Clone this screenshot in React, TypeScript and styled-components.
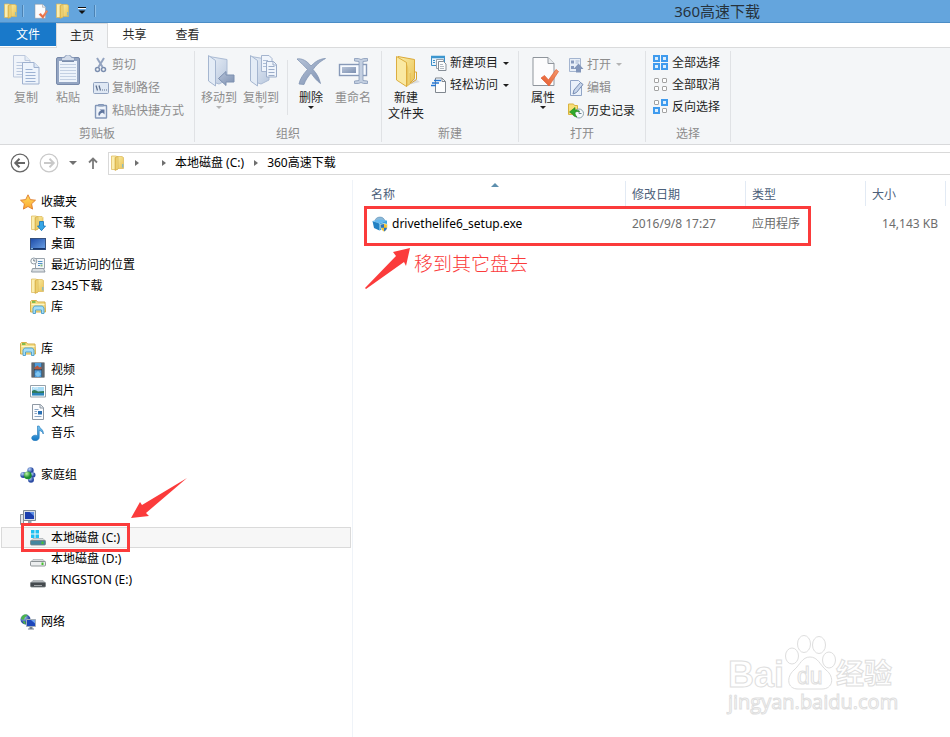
import React from 'react';
import styled, { createGlobalStyle, css } from 'styled-components';

const RED = '#fb3b3b';

const GlobalStyle = createGlobalStyle`
  * { box-sizing: border-box; }
  html, body { margin: 0; background: #fff; }
  body, button, table {
    font-family: "Noto Sans", "Noto Sans CJK SC", sans-serif;
    font-size: 12px;
    line-height: 16px;
    color: #1e1e1e;
  }
  button { padding: 0; border: 0; background: none; white-space: nowrap; }
  svg { display: block; flex: none; }
  a { color: inherit; text-decoration: none; }
`;

/* ---------- page ---------- */

const Window = styled.div`
  min-height: 100vh;
  display: flex;
  flex-direction: column;
  overflow: hidden;
`;

const TitleBar = styled.header`
  height: 23px;
  display: flex;
  align-items: center;
  background: #64a5dd;
  border-bottom: 1px solid #4b8dc6;
`;

const QuickAccess = styled.div`
  display: flex;
  align-items: center;
  flex: 1 1 0;
`;

const QuickButton = styled.button<{ $w: number }>`
  width: ${p => p.$w}px;
  height: 20px;
  display: flex;
  align-items: center;
  justify-content: center;
`;

const QuickDivider = styled.span`
  width: 2px;
  height: 12px;
  background: #4b82b3;
  border-right: 1px solid #8cbfe9;
`;

const Title = styled.h1`
  margin: 0;
  flex: 0 0 auto;
  font-size: 15px;
  line-height: 22px;
  font-weight: 400;
  color: #26323c;
`;

const TitleSpacer = styled.div`
  flex: 0 1 190px;
`;

const TabStrip = styled.div`
  height: 25px;
  display: flex;
  border-bottom: 1px solid #dadbdc;
`;

const Tab = styled.button<{ $kind?: 'file' | 'active' }>`
  width: 53px;
  height: 24px;
  color: #2b2b2b;
  ${p => p.$kind === 'file' && css`
    width: 56px;
    height: 23px;
    background: #1979ca;
    color: #fff;
  `}
  ${p => p.$kind === 'active' && css`
    width: 52px;
    height: 25px;
    background: #f4f6f8;
    border: 1px solid #dadbdc;
    border-bottom: 0;
  `}
`;

/* ---------- ribbon ---------- */

const Ribbon = styled.div`
  height: 97px;
  display: flex;
  padding: 3px 0 2px;
  background: #f4f6f8;
  border-bottom: 1px solid #d8d9db;
`;

const Group = styled.section<{ $w: number }>`
  width: ${p => p.$w}px;
  display: flex;
  flex-direction: column;
  justify-content: space-between;
  border-right: 1px solid #e0e2e5;
`;

const GroupBody = styled.div<{ $left?: number }>`
  display: flex;
  padding: 1px 0 0 ${p => p.$left ?? 3}px;
`;

const GroupName = styled.div`
  text-align: center;
  color: #8c8c8c;
`;

const LargeButton = styled.button`
  width: 42px;
  display: flex;
  flex-direction: column;
  align-items: center;
  padding-top: 3px;
  color: #1e1e1e;
  svg + span { margin-top: 3px; }
  &:disabled { color: #8d8d8d; }
`;

const InnerDivider = styled.span`
  width: 1px;
  height: 55px;
  margin: 8px 2px 0 5px;
  background: #e0e2e5;
`;

const Stack = styled.div<{ $row: number; $left: number; $top: number }>`
  display: grid;
  grid-auto-rows: ${p => p.$row}px;
  align-content: start;
  justify-items: start;
  padding: ${p => p.$top}px 0 0 ${p => p.$left}px;
`;

const SmallButton = styled.button`
  display: flex;
  align-items: center;
  gap: 3px;
  color: #1e1e1e;
  &:disabled { color: #8d8d8d; }
`;

const Caret = styled.span<{ $dim?: boolean; $side?: boolean }>`
  border: 3px solid transparent;
  border-top-color: ${p => (p.$dim ? '#b4b4b4' : '#1e1e1e')};
  border-bottom-width: 0;
  margin-left: ${p => (p.$side ? 2 : 0)}px;
`;

/* ---------- address bar ---------- */

const AddressRow = styled.div`
  height: 35px;
  display: flex;
  align-items: center;
  padding: 1px 0 0 10px;
`;

const NavButton = styled.button<{ $w: number }>`
  width: ${p => p.$w}px;
  height: 22px;
  display: flex;
  align-items: center;
  justify-content: center;
`;

const Address = styled.nav`
  flex: 1;
  height: 23px;
  display: flex;
  align-items: center;
  padding-left: 1px;
  border: 1px solid #d9d9d9;
  border-right: 0;
`;

const Crumb = styled.button`
  color: #000;
`;

const Arrow = styled.span<{ $before: number; $after: number }>`
  border: 3px solid transparent;
  border-left: 4px solid #6f6f6f;
  border-right-width: 0;
  margin: 0 ${p => p.$after}px 0 ${p => p.$before}px;
`;

/* ---------- content ---------- */

const Content = styled.div`
  flex: 1;
  display: flex;
`;

const Sidebar = styled.nav`
  width: 353px;
  flex: none;
  padding: 11px 1px 0 1px;
  border-right: 1px solid #eff3f8;
`;

const TreeSection = styled.div`
  margin-bottom: 21px;
`;

const TreeItem = styled.a<{ $child?: boolean; $selected?: boolean }>`
  position: relative;
  height: 21px;
  display: flex;
  align-items: center;
  gap: 5px;
  padding-left: ${p => (p.$child ? 28 : 18)}px;
  border: 1px solid ${p => (p.$selected ? '#dadada' : 'transparent')};
  background: ${p => (p.$selected ? '#f7f7f7' : 'none')};
  color: #000;
`;

const DriveMark = styled.span`
  position: absolute;
  left: 19px;
  top: -5px;
  width: 109px;
  height: 29px;
  border: 3px solid ${RED};
`;

const DriveArrow = styled.svg`
  position: absolute;
  left: 128px;
  top: -51px;
`;

const Files = styled.main`
  position: relative;
  flex: 1;
  min-width: 0;
  padding: 1px 0 0 11px;
`;

const FileTable = styled.table`
  width: 582px;
  table-layout: fixed;
  border-collapse: separate;
  border-spacing: 0;
  th {
    position: relative;
    height: 25px;
    padding: 2px 0 0 6px;
    text-align: left;
    font-weight: 400;
    color: #4c607a;
    border-right: 1px solid #e2eaf4;
  }
  td {
    height: 36px;
    padding: 0 0 0 6px;
    color: #6d6d6d;
  }
  th:first-child { padding-left: 7px; }
  td:first-child { position: relative; padding-left: 8px; color: #000; }
  td:last-child { text-align: right; padding-right: 8px; }
`;

const SortMark = styled.span`
  position: absolute;
  left: 127px;
  top: 2px;
  border: 4px solid transparent;
  border-bottom: 4px solid #5d8fae;
  border-top-width: 0;
`;

const FileName = styled.a`
  display: flex;
  align-items: center;
  gap: 4px;
`;

const FileMark = styled.span`
  position: absolute;
  left: 0;
  top: 0;
  width: 447px;
  height: 40px;
  border: 3px solid ${RED};
  pointer-events: none;
`;

const FileArrow = styled.svg`
  position: absolute;
  left: 0;
  top: 41px;
`;

const Note = styled.span`
  position: absolute;
  left: 50px;
  top: 45px;
  font-size: 19px;
  line-height: 26px;
  font-weight: 300;
  color: ${RED};
  white-space: nowrap;
`;

const Watermark = styled.svg`
  position: absolute;
  right: 46px;
  bottom: 16px;
`;

/* ---------- icons ---------- */

const Defs = () => (
  <svg width="0" height="0" aria-hidden="true">
    <defs>
      <linearGradient id="gold" x1="0" x2="1" y1="0" y2="1">
        <stop offset="0" stopColor="#fbeea6" /><stop offset="1" stopColor="#e9c255" />
      </linearGradient>
      <linearGradient id="goldSide" x1="0" x2="1">
        <stop offset="0" stopColor="#e0b84c" /><stop offset="1" stopColor="#f8e48f" />
      </linearGradient>
      <linearGradient id="steel" x1="0" x2="1" y1="0" y2="1">
        <stop offset="0" stopColor="#eaf0f8" /><stop offset="1" stopColor="#b9c8de" />
      </linearGradient>
      <linearGradient id="steelDark" x1="0" x2="1" y1="0" y2="1">
        <stop offset="0" stopColor="#b6c3d8" /><stop offset="1" stopColor="#7d90b1" />
      </linearGradient>
      <linearGradient id="tick" x1="0" x2="1" y1="1" y2="0">
        <stop offset="0" stopColor="#e4572b" /><stop offset="1" stopColor="#f59a6d" />
      </linearGradient>
      <linearGradient id="screen" x1="0" x2="1" y1="0" y2="1">
        <stop offset="0" stopColor="#1c4aa8" /><stop offset="1" stopColor="#6ea4e6" />
      </linearGradient>
      <radialGradient id="orbBlue" cx=".35" cy=".3">
        <stop offset="0" stopColor="#b7d3f7" /><stop offset="1" stopColor="#2c4ca4" />
      </radialGradient>
      <radialGradient id="orbGreen" cx=".35" cy=".3">
        <stop offset="0" stopColor="#c3f5a8" /><stop offset="1" stopColor="#1d8f2e" />
      </radialGradient>
      <linearGradient id="water" x1="0" x2="0" y1="0" y2="1">
        <stop offset="0" stopColor="#7cc6f0" /><stop offset="1" stopColor="#1277c4" />
      </linearGradient>
      <linearGradient id="starFill" x1="0" x2="0" y1="0" y2="1">
        <stop offset="0" stopColor="#ffdf62" /><stop offset="1" stopColor="#fba52d" />
      </linearGradient>
    </defs>
  </svg>
);

const Svg = ({ w = 16, h = w, box, children }: { w?: number; h?: number; box?: string; children: React.ReactNode }) => (
  <svg width={w} height={h} viewBox={box ?? `0 0 ${w} ${h}`} fill="none" aria-hidden="true">{children}</svg>
);

const Folder = () => (
  <Svg>
    <path d="M6.500 1.500h5.500l1.500 1v11h-7z" fill="url(#gold)" stroke="#dcb857" strokeWidth=".7" />
    <path d="M1.500 1h4.500l1.500 1v12.500H1.500z" fill="#fbeeb0" stroke="#dcb857" strokeWidth=".7" />
    <path d="M5 2.500l3-1v12.500l-3 1.500z" fill="url(#goldSide)" stroke="#d2a844" strokeWidth=".6" />
    <path d="M12.800 9v3.500" stroke="#69b6df" />
  </Svg>
);

const Properties = ({ size = 16 }: { size?: number }) => (
  <Svg w={size} box="-1 -1 32 32">
    <path d="M5 1.500h15l6 6v22H5z" fill="#fcfcfd" stroke="#8f959c" strokeWidth="1" />
    <path d="M20 1.500v6h6" fill="#e8ebef" stroke="#8f959c" strokeWidth="1" />
    <path d="M13 22l3.500-2.500 4 4.500L28 13.500l2.500 2L21 30z" fill="url(#tick)" stroke="#df5f36" strokeWidth=".7" />
  </Svg>
);

const Customize = () => (
  <Svg w={8} h={8}><path d="M0 1.500h8" stroke="#fff" /><path d="M0 .5h8" stroke="#111" /><path d="M.5 3.500h7L4 7z" fill="#111" /></Svg>
);

const PageShape = ({ x, y }: { x: number; y: number }) => (
  <g transform={`translate(${x} ${y})`}>
    <path d="M.5.5h11.500l5 5v16.500H.5z" fill="#eef4fc" stroke="#9fb1cf" />
    <path d="M12 .5v5h5" fill="#dbe6f5" stroke="#9fb1cf" />
    <path d="M3.500 7.500h7M3.500 10.500h10M3.500 13.500h10M3.500 16.500h10M3.500 19.500h10" stroke="#9db2d3" />
  </g>
);

const Copy = () => <Svg w={32}><g opacity=".65"><PageShape x={3} y={0} /></g><PageShape x={12} y={7} /></Svg>;

const Paste = () => (
  <Svg w={32}>
    <rect x="4.500" y="2.500" width="23" height="27" rx="1.500" fill="#94a5c2" stroke="#7789aa" />
    <path d="M7 6h18v21H7z" fill="#edf3fb" />
    <path d="M8 9.500h16M8 12.500h16M8 15.500h16M8 18.500h16M8 21.500h16M8 24.500h16" stroke="#c3d0e3" />
    <path d="M9.500 5.500V3l3.500-1c0-3 6-3 6 0l3.500 1v2.500z" fill="#d3dcea" stroke="#8a9cba" />
    <path d="M10 6.500h12" stroke="#7b8dac" />
  </Svg>
);

const Scissors = () => (
  <Svg>
    <path d="M4 1l5.500 9M11 1L5.500 10" stroke="#94a4c0" strokeWidth="2" />
    <circle cx="4.500" cy="12.500" r="2" stroke="#7c8fb0" strokeWidth="1.500" />
    <circle cx="10.500" cy="12.500" r="2" stroke="#7c8fb0" strokeWidth="1.500" />
  </Svg>
);

const CopyPath = () => (
  <Svg>
    <rect x=".5" y="2.500" width="15" height="11" rx="1" fill="#dfe8f4" stroke="#91a2bf" />
    <path d="M3 5.500l1.500 5M6 5.500l1.500 5" stroke="#5c6e8c" strokeWidth="1.200" />
    <path d="M9 10h1M11 10h1M13 10h1" stroke="#5c6e8c" strokeWidth="1.200" />
  </Svg>
);

const PasteShortcut = () => (
  <Svg>
    <rect x="2.500" y="2.500" width="11" height="12.500" rx=".5" fill="#eef3fa" stroke="#8397b8" strokeWidth="1.400" />
    <path d="M5.500 3V1.500h5V3z" fill="#a6b5cd" stroke="#8397b8" />
    <path d="M5.500 12.500c-.5-3 .5-4.500 2.500-4.800L6.500 6.500h5v5L9.800 9.800C8 10 7 10.500 7 12.500z" fill="#61779f" />
  </Svg>
);

const SteelFolder = ({ children }: { children: React.ReactNode }) => (
  <Svg w={32}>
    <path d="M6 1.500l18 3V25l-8 4-6-2z" fill="url(#steel)" stroke="#abbbd4" />
    <path d="M5.500.5l7 5v25.500l-7-5z" fill="#e4ecf6" stroke="#a5b6d0" />
    {children}
  </Svg>
);

const MoveTo = () => (
  <SteelFolder><path d="M15.500 23.500l7.500-7V20h8v7h-8v3.500z" fill="url(#steelDark)" stroke="#7d90b0" /></SteelFolder>
);

const CopyTo = () => (
  <SteelFolder>
    <path d="M16.500.5h7.500l3 3v13h-10.500z" fill="#f0f5fc" stroke="#a5b5cf" />
    <path d="M18 5.500h5M18 8.500h5M18 11.500h4" stroke="#aebed7" />
    <path d="M21.500 6.500h7l3 3V22h-10z" fill="#f0f5fc" stroke="#9cadc9" />
    <path d="M28 6.500v3.500h3.500M23.500 11.500h6M23.500 14.500h6M23.500 17.500h6M23.500 20.500h6" stroke="#9cadc9" />
  </SteelFolder>
);

const Delete = () => (
  <Svg w={32}>
    <path d="M2 4c5-1 10 2 14 7 3-3 7-7 14.500-7.500C24 7 20.500 11 18 14.500c4 4.500 6 8 7.500 14-4-3-6.500-6-9.500-10.500C12.500 22.500 10.500 25 9 29.500L4 29c1-5 4-9.500 8.500-14.500C9.500 11 6 8 2 4z" fill="url(#steelDark)" stroke="#8395b4" strokeWidth=".8" />
  </Svg>
);

const Rename = () => (
  <Svg w={32}>
    <rect x="2.500" y="9.500" width="27" height="11" fill="#f7faff" stroke="#8799b8" strokeWidth="1.400" />
    <rect x="5" y="12" width="14" height="6" fill="url(#steelDark)" />
    <path d="M17.500 3.500h4l2.500 1 2.500-1h4v2.500l-4.500.5v19l4.500.5v2.500h-4l-2.500-1-2.500 1h-4V26l4.500-.5v-19L17.500 6z" fill="#c3cfe1" stroke="#8799b8" strokeWidth=".8" />
  </Svg>
);

const BigFolder = () => (
  <Svg w={32}>
    <path d="M18 30l12-3-6-4z" fill="#d9dce0" />
    <path d="M8 1.500l16.500 3v19l-6 6h-5z" fill="url(#gold)" stroke="#dba93a" />
    <path d="M6.500 1.500l10 6v24l-10-6.500z" fill="#fae9a2" stroke="#dcae41" />
    <path d="M16.500 7.500v24l3.500-2.500V18" fill="url(#goldSide)" stroke="#dba93a" strokeWidth=".6" />
    <path d="M24.500 17h2v7.500l-6 4" stroke="#d9a637" />
  </Svg>
);

const NewItem = () => (
  <Svg>
    <path d="M.5 1.500h13v9H.5z" fill="#e9f4fd" stroke="#3c8fc8" />
    <path d="M0 2h14" stroke="#3d96cf" strokeWidth="2.500" />
    <path d="M2 5.500h2M2 7.500h2" stroke="#3c8fc8" />
    <path d="M5.500 4.500h7v9h-7z" fill="#fbfcfd" stroke="#9aa1a9" />
    <path d="M7.500 6.500h5l2.500 2.500v6.500H7.500z" fill="#fbfcfd" stroke="#858d96" />
    <path d="M9 9.500h3M9 11.500h4M9 13.500h4" stroke="#b2b9c1" />
  </Svg>
);

const EasyAccess = () => (
  <Svg>
    <path d="M4.500 1h6.500l3.500 3.500v11h-10z" fill="#fcfdfe" stroke="#80878f" />
    <path d="M11 1v3.500h3.500" stroke="#80878f" />
    <path d="M3 3.500h7M1 6h7M0 8.500h5" stroke="#2477d4" strokeWidth="1.400" />
  </Svg>
);

const Open = () => (
  <Svg>
    <path d="M1.500 1.500h11v13h-11z" fill="#e8eff8" stroke="#a4b5d0" />
    <path d="M3 3.500h3v3H3zM3 9h3v3H3z" fill="#879abd" />
    <path d="M7.500 4h4M7.500 6h3" stroke="#a4b5d0" />
    <path d="M8 15.500V12H5.500L10.500 6.500 15.500 12h-2.500v3.500z" fill="#8296ba" />
  </Svg>
);

const Edit = () => (
  <Svg>
    <path d="M2.500.5h8l3 3v12h-11z" fill="#eaf1fa" stroke="#91a5c7" />
    <path d="M5 14l1-4 6.500-7.500 2.500 2-6.500 8z" fill="#c7d5ea" stroke="#758bb2" />
  </Svg>
);

const History = () => (
  <Svg>
    <path d="M.5 1h5l1 1.500h3v9h-9z" fill="#f8df79" stroke="#d9b240" />
    <circle cx="11" cy="10.500" r="4.500" fill="#f6fafc" stroke="#8fa3ae" />
    <path d="M11 7.500v3h2.500" stroke="#6d8190" />
    <path d="M1.500 9L7 4.500v2.500c2-.2 3.500.3 4.500 1.500-2-.3-3.700.2-4.500 1 0 1.500.5 3 2 4.500C6 13.500 5 12.500 5 11.500z" fill="#2faa2b" stroke="#1b831d" strokeWidth=".6" />
  </Svg>
);

const SelectGrid = ({ on }: { on: number[] }) => (
  <Svg>
    {[[0, 0], [8, 0], [0, 8], [8, 8]].map(([x, y], i) => on.includes(i)
      ? <rect key={i} x={x + 1} y={y + 1} width="5" height="5" fill="#dceefd" stroke="#3f9bee" strokeWidth="2" />
      : <rect key={i} x={x + 1.5} y={y + 1.5} width="4" height="4" rx=".5" fill="#fff" stroke="#a3a3a3" />)}
  </Svg>
);

const RoundArrow = ({ flip, color }: { flip?: boolean; color: string }) => (
  <Svg w={20}>
    <circle cx="10" cy="10" r="8.800" stroke={color} strokeWidth="1.200" />
    <g transform={flip ? 'translate(20 0) scale(-1 1)' : undefined}>
      <path d="M5.500 10h9.500M9.500 5.800L5.300 10l4.200 4.200" stroke={color} strokeWidth="2" />
    </g>
  </Svg>
);

const UpArrow = () => (
  <Svg w={12} h={14}><path d="M6 13V2.500M2 6.500l4-4 4 4" stroke="#7a7a7a" strokeWidth="1.800" /></Svg>
);

const Star = () => (
  <Svg><path d="M8 .8l2.300 4.800 5.200.6-3.900 3.600 1 5.300L8 12.500l-4.600 2.600 1-5.300L.5 6.200l5.200-.6z" fill="url(#starFill)" stroke="#de7a2c" strokeWidth=".9" /></Svg>
);

const Download = () => (
  <Svg>
    <path d="M6.500 1.500h5.500l1 1v11h-6.500z" fill="url(#gold)" stroke="#dcb857" strokeWidth=".7" />
    <path d="M1.500 1h4.500l1.500 1v12.500H1.500z" fill="#fbeeb0" stroke="#dcb857" strokeWidth=".7" />
    <path d="M5 2.500l3-1v12.500l-3 1.500z" fill="url(#goldSide)" stroke="#d2a844" strokeWidth=".6" />
    <path d="M9.500 6.500h4V11h2l-4 4.700L7.500 11h2z" fill="#36a6e6" stroke="#1674b8" strokeWidth=".8" />
  </Svg>
);

const Desktop = () => (
  <Svg>
    <rect x=".5" y="2.500" width="15" height="11" fill="url(#screen)" stroke="#36507c" />
    <path d="M1 12.700h14" stroke="#16356d" strokeWidth="1.400" /><path d="M1 12.700h2" stroke="#9ad0f2" />
  </Svg>
);

const Recent = () => (
  <Svg>
    <path d="M5.500 1.500h9v10h-9z" fill="#f4f7fa" stroke="#9aa4ad" />
    <path d="M8 4.500h4.500M8 6.500h4.500M8 8.500h2" stroke="#5290c5" />
    <path d="M10.500 7.500h2v2h-2z" fill="#83bb86" />
    <path d="M2.500 11.500h11l1.500 3.500H1.500z" fill="#d9dee2" stroke="#929ca5" />
    <circle cx="3.800" cy="4" r="3" fill="#fafcfd" stroke="#909ba5" /><path d="M3.800 2.200V4h1.700" stroke="#5f6d79" strokeWidth=".9" />
  </Svg>
);

const Library = () => (
  <Svg>
    <path d="M.5 13V2.500l1-1h5l1 1.500h7.500l.5 10z" fill="#f5df89" stroke="#d5ae49" />
    <path d="M2 3h3.500" stroke="#5eb13b" strokeWidth="1.500" />
    <path d="M1.500 5.500h13" stroke="#fdf5c7" />
    <path d="M3 14.500V9l1.500-2h8L14 9v5.500h-2.500V11h-6v3.500z" fill="#a4ddf6" stroke="#4b9dca" strokeWidth=".9" />
  </Svg>
);

const Video = () => (
  <Svg>
    <path d="M1.500.5h13v15h-13z" fill="#303841" />
    <path d="M4.500 1h7v6.300h-7zM4.500 8.300h7V15h-7z" fill="#4e9cdb" />
    <path d="M4.500 5.500l3-2 2 2 2-1v2.800h-7z" fill="#b5593e" /><path d="M5 12l3-3 3 3-2 2.500H7z" fill="#80c7f3" />
    <path d="M3 1.500v14M13 1.500v14" stroke="#e9edf0" strokeDasharray="1 1" />
  </Svg>
);

const Picture = () => (
  <Svg>
    <path d="M.5 2.500h15v11.500H.5z" fill="#fff" stroke="#95a0a9" />
    <path d="M2 4h12v8.500H2z" fill="#a9dcf5" />
    <path d="M2 8c2-1.500 4-1 6 .5l6-.500v2H2z" fill="#2f7a5c" /><path d="M2 10h12v2.500H2z" fill="#2b84bb" />
    <path d="M3 5.500c2-1.500 3 0 5-.5" stroke="#e6f6fe" />
  </Svg>
);

const Document = () => (
  <Svg>
    <path d="M2.500.5h8l3 3v12h-11z" fill="#fbfcfe" stroke="#8f99a4" />
    <path d="M10 .5v3.500h3.500" fill="#e4e9ee" stroke="#8f99a4" />
    <path d="M4.500 5.500h4M4.500 7.500h2.500M4.500 9.500h2.500M4.500 12.500h7" stroke="#8ba5c2" />
    <path d="M8 7h4v3.500H8z" fill="#286fb3" />
  </Svg>
);

const Music = () => (
  <Svg>
    <path d="M7.500 1h1.700c.3 2.500 4.800 3.500 4 8-.4-1.700-1.500-3-4-3.500v7c0 4-7.500 4.200-7.500.5 0-2.500 3.500-3.500 5.800-2.300z" fill="url(#water)" stroke="#1972b7" strokeWidth=".6" />
  </Svg>
);

const HomeGroup = () => (
  <Svg>
    <circle cx="10.500" cy="3.500" r="3.200" fill="url(#orbBlue)" /><circle cx="3.300" cy="8" r="3" fill="url(#orbBlue)" />
    <circle cx="12.700" cy="8" r="2.800" fill="url(#orbBlue)" /><circle cx="11" cy="12.800" r="3" fill="url(#orbBlue)" />
    <circle cx="7.800" cy="8.300" r="3.900" fill="url(#orbGreen)" />
  </Svg>
);

const Computer = () => (
  <Svg>
    <path d="M.5 5.500h3v10h-3z" fill="#e3e7eb" stroke="#87919b" />
    <path d="M3.500 1.500h12v10h-12z" fill="#d8dfe7" stroke="#7f8a95" />
    <path d="M5 3h9v7H5z" fill="#1b3fae" /><path d="M9.500 3H14v4z" fill="#5d8fe6" />
    <path d="M8 12h3.500v2H14v1.500H5.500V14H8z" fill="#98a3ad" />
  </Svg>
);

const Drive = ({ kind }: { kind: 'system' | 'disk' | 'usb' }) => (
  <Svg>
    {kind === 'system' && <path d="M1 0h3.500v3.500H1zM5.500 0H9v3.500H5.500zM1 4.500h3.500V8H1zM5.500 4.500H9V8H5.500z" fill="#1fc0f1" />}
    <path d="M3 8.500h10l2.500 2.500H.5z" fill={kind === 'usb' ? '#b2b6b9' : '#d8dbdd'} stroke="#9ca1a5" strokeWidth=".6" />
    <rect x=".5" y="10.500" width="15" height="4.500" rx="1" fill={kind === 'disk' ? '#eceeef' : kind === 'usb' ? '#454a4e' : '#44869f'} stroke="#777d82" strokeWidth=".8" />
    {kind !== 'usb' && <path d="M12.500 11.500v2.500" stroke="#46c22e" strokeWidth="2" />}
    {kind === 'usb' && <path d="M4 13.500h8" stroke="#a1a5a8" />}
  </Svg>
);

const Network = () => (
  <Svg>
    <circle cx="5.500" cy="5.500" r="5" fill="url(#orbBlue)" />
    <path d="M1.500 3c2-3 5-2.500 6-2-1 2-3 1.500-3 3.500s-2.500 1-3.500.5zM3 7c2 0 3 1 2.500 3.500C4 10 2.500 8.500 3 7z" fill="#4cb54a" />
    <path d="M6.500 5.500h9v7h-9z" fill="#1c46bb" stroke="#a3aeb9" /><path d="M11 6h4v3.500z" fill="#6da2f0" />
    <path d="M9.500 13h3v1.500h1.500v1H8v-1h1.500z" fill="#73808d" />
  </Svg>
);

const Installer = () => (
  <Svg>
    <path d="M3 4.500C4 .5 10 0 12 3l1.500 2.500-9 1z" fill="#8cb9d9" stroke="#5e8eb4" strokeWidth=".6" />
    <path d="M.5 5l7 2.500v7L2 12z" fill="#2181c4" /><path d="M7.500 7.500L15 4.500v7L7.500 14.500z" fill="#3ba3e0" />
    <path d="M.5 5L7 3.500l8 1-7.500 3z" fill="#65baf0" />
    <path d="M8.500 8.500l3.500-1 3.500 1c0 4-1 6-3.500 7.300-2.500-1.300-3.500-3.300-3.500-7.300z" fill="#f5c431" stroke="#f4f6f8" strokeWidth=".6" />
    <path d="M12 8v3.700H9c-.3-1-.4-2-.4-3zM12 11.700h3c-.4 1.800-1.300 3-3 3.800z" fill="#2974c4" />
  </Svg>
);

/* ---------- data ---------- */

type Node = { text: string; icon: React.ReactNode; selected?: boolean };

const tree: { root: Node; children: Node[] }[] = [
  {
    root: { text: '收藏夹', icon: <Star /> },
    children: [
      { text: '下载', icon: <Download /> },
      { text: '桌面', icon: <Desktop /> },
      { text: '最近访问的位置', icon: <Recent /> },
      { text: '2345下载', icon: <Folder /> },
      { text: '库', icon: <Library /> },
    ],
  },
  {
    root: { text: '库', icon: <Library /> },
    children: [
      { text: '视频', icon: <Video /> },
      { text: '图片', icon: <Picture /> },
      { text: '文档', icon: <Document /> },
      { text: '音乐', icon: <Music /> },
    ],
  },
  { root: { text: '家庭组', icon: <HomeGroup /> }, children: [] },
  {
    root: { text: '', icon: <Computer /> },
    children: [
      { text: '本地磁盘 (C:)', icon: <Drive kind="system" />, selected: true },
      { text: '本地磁盘 (D:)', icon: <Drive kind="disk" /> },
      { text: 'KINGSTON (E:)', icon: <Drive kind="usb" /> },
    ],
  },
  { root: { text: '网络', icon: <Network /> }, children: [] },
];

const Large = ({ icon, text, disabled, caret }: { icon: React.ReactNode; text: string; disabled?: boolean; caret?: boolean }) => (
  <LargeButton disabled={disabled}>
    {icon}
    {text.split('\n').map((t, i) => <span key={i}>{t}</span>)}
    {caret && <Caret $dim={disabled} />}
  </LargeButton>
);

const Small = ({ icon, text, disabled, caret }: { icon: React.ReactNode; text: string; disabled?: boolean; caret?: boolean }) => (
  <SmallButton disabled={disabled}>
    {icon}
    <span>{text}</span>
    {caret && <Caret $side $dim={disabled} />}
  </SmallButton>
);

export default function App() {
  return (
    <Window>
      <GlobalStyle />
      <TitleBar>
        <QuickAccess>
          <QuickButton $w={22} aria-label="360高速下载"><Folder /></QuickButton>
          <QuickDivider />
          <QuickButton $w={32} aria-label="属性"><Properties /></QuickButton>
          <QuickButton $w={14} aria-label="新建文件夹"><Folder /></QuickButton>
          <QuickButton $w={24} aria-label="自定义"><Customize /></QuickButton>
          <QuickDivider />
        </QuickAccess>
        <Title>360高速下载</Title>
        <TitleSpacer />
      </TitleBar>

      <TabStrip>
        <Tab $kind="file">文件</Tab>
        <Tab $kind="active">主页</Tab>
        <Tab>共享</Tab>
        <Tab>查看</Tab>
      </TabStrip>

      <Ribbon>
        <Group $w={195}>
          <GroupBody $left={5}>
            <Large icon={<Copy />} text="复制" disabled />
            <Large icon={<Paste />} text="粘贴" disabled />
            <Stack $row={23} $left={4} $top={1}>
              <Small icon={<Scissors />} text="剪切" disabled />
              <Small icon={<CopyPath />} text="复制路径" disabled />
              <Small icon={<PasteShortcut />} text="粘贴快捷方式" disabled />
            </Stack>
          </GroupBody>
          <GroupName>剪贴板</GroupName>
        </Group>
        <Group $w={187}>
          <GroupBody>
            <Large icon={<MoveTo />} text="移动到" disabled caret />
            <Large icon={<CopyTo />} text="复制到" disabled caret />
            <InnerDivider />
            <Large icon={<Delete />} text="删除" caret />
            <Large icon={<Rename />} text="重命名" disabled />
          </GroupBody>
          <GroupName>组织</GroupName>
        </Group>
        <Group $w={137}>
          <GroupBody>
            <Large icon={<BigFolder />} text={'新建\n文件夹'} />
            <Stack $row={22} $left={4} $top={0}>
              <Small icon={<NewItem />} text="新建项目" caret />
              <Small icon={<EasyAccess />} text="轻松访问" caret />
            </Stack>
          </GroupBody>
          <GroupName>新建</GroupName>
        </Group>
        <Group $w={127}>
          <GroupBody>
            <Large icon={<Properties size={32} />} text="属性" caret />
            <Stack $row={23} $left={4} $top={1}>
              <Small icon={<Open />} text="打开" disabled caret />
              <Small icon={<Edit />} text="编辑" disabled />
              <Small icon={<History />} text="历史记录" />
            </Stack>
          </GroupBody>
          <GroupName>打开</GroupName>
        </Group>
        <Group $w={85}>
          <GroupBody>
            <Stack $row={22} $left={4} $top={0}>
              <Small icon={<SelectGrid on={[0, 1, 2, 3]} />} text="全部选择" />
              <Small icon={<SelectGrid on={[]} />} text="全部取消" />
              <Small icon={<SelectGrid on={[1, 2]} />} text="反向选择" />
            </Stack>
          </GroupBody>
          <GroupName>选择</GroupName>
        </Group>
      </Ribbon>

      <AddressRow>
        <NavButton $w={20} aria-label="后退"><RoundArrow color="#666" /></NavButton>
        <NavButton $w={37} aria-label="前进"><RoundArrow flip color="#c9c9c9" /></NavButton>
        <NavButton $w={11} aria-label="历史"><Svg w={8} h={4}><path d="M0 0h8L4 4z" fill="#717171" /></Svg></NavButton>
        <NavButton $w={30} aria-label="上移"><UpArrow /></NavButton>
        <Address>
          <Folder />
          <Arrow $before={9} $after={23} />
          <Arrow $before={0} $after={9} />
          <Crumb>本地磁盘 (C:)</Crumb>
          <Arrow $before={10} $after={9} />
          <Crumb>360高速下载</Crumb>
        </Address>
      </AddressRow>

      <Content>
        <Sidebar>
          {tree.map((section, i) => (
            <TreeSection key={i}>
              <TreeItem href="#" aria-label={section.root.text || '计算机'}>{section.root.icon}{section.root.text}</TreeItem>
              {section.children.map(node => (
                <TreeItem key={node.text} href="#" $child $selected={node.selected}>
                  {node.icon}{node.text}
                  {node.selected && (
                    <>
                      <DriveMark />
                      <DriveArrow width="58" height="42" aria-hidden="true">
                        <path d="M1 41L10 25l2 3L57 1 16 36l3 3z" fill={RED} />
                      </DriveArrow>
                    </>
                  )}
                </TreeItem>
              ))}
            </TreeSection>
          ))}
        </Sidebar>
        <Files>
          <FileTable>
            <colgroup><col width="262" /><col width="120" /><col width="120" /><col width="80" /></colgroup>
            <thead>
              <tr><th>名称<SortMark /></th><th>修改日期</th><th>类型</th><th>大小</th></tr>
            </thead>
            <tbody>
              <tr>
                <td>
                  <FileName href="#"><Installer />drivethelife6_setup.exe</FileName>
                  <FileMark />
                  <FileArrow width="48" height="44" aria-hidden="true">
                    <path d="M46 1L29 5l3 4L1 41l1 1 38-27 2 4z" fill={RED} />
                  </FileArrow>
                  <Note>移到其它盘去</Note>
                </td>
                <td>2016/9/8 17:27</td>
                <td>应用程序</td>
                <td>14,143 KB</td>
              </tr>
            </tbody>
          </FileTable>
          <Watermark width="178" height="88" viewBox="0 0 178 88" fill="#fff" stroke="#dedede">
            <text x="2" y="54" fontFamily="Liberation Sans" fontWeight="700" fontSize="36">Bai</text>
            <ellipse cx="66" cy="23" rx="6.500" ry="8" />
            <ellipse cx="78" cy="11" rx="6.500" ry="8.500" />
            <ellipse cx="93" cy="12" rx="6.500" ry="8.500" />
            <ellipse cx="103" cy="27" rx="6.500" ry="8" />
            <path d="M84 24c8 0 10 8 16 13 9 7 7 19-4 19H72c-11 0-12-12-4-19 6-5 8-13 16-13z" />
            <text x="71" y="51" fontFamily="Liberation Sans" fontWeight="400" fontSize="23">du</text>
            <text x="110" y="51" fontFamily="Noto Sans CJK SC" fontWeight="700" fontSize="28">经验</text>
            <text x="2" y="76" fontFamily="Open Sans" fontWeight="400" fontSize="20">jingyan.baidu.com</text>
          </Watermark>
        </Files>
      </Content>
      <Defs />
    </Window>
  );
}
